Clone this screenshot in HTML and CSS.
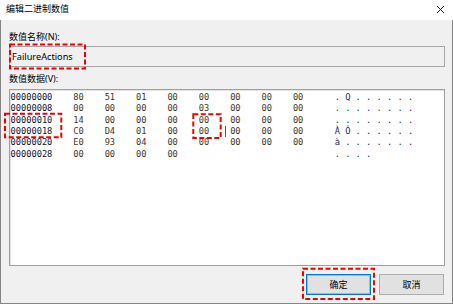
FILE: index.html
```html
<!DOCTYPE html>
<html lang="zh-CN">
<head>
<meta charset="utf-8">
<title>编辑二进制数值</title>
<link rel="stylesheet" href="styles.css">
</head>
<body>
<div class="window">
  <div class="titlebar">
    <span class="title">编辑二进制数值</span>
    <svg class="close" width="9" height="9" viewBox="0 0 9 9"><path d="M1 1L8 8M8 1L1 8" stroke="#1a1a1a" stroke-width="1" fill="none"/></svg>
  </div>
  <div class="dialog">
    <div class="label">数值名称(N):</div>
    <div class="namebox">FailureActions</div>
    <div class="label label-data">数值数据(V):</div>
    <div class="hexbox">
      <div class="row"><span class="off">00000000</span><span class="b">80</span><span class="b">51</span><span class="b">01</span><span class="b">00</span><span class="b">00</span><span class="b">00</span><span class="b">00</span><span class="b">00</span><span class="asc">. Q . . . . . .</span></div>
      <div class="row"><span class="off">00000008</span><span class="b">00</span><span class="b">00</span><span class="b">00</span><span class="b">00</span><span class="b">03</span><span class="b">00</span><span class="b">00</span><span class="b">00</span><span class="asc">. . . . . . . .</span></div>
      <div class="row"><span class="off">00000010</span><span class="b">14</span><span class="b">00</span><span class="b">00</span><span class="b">00</span><span class="b">00</span><span class="b">00</span><span class="b">00</span><span class="b">00</span><span class="asc">. . . . . . . .</span></div>
      <div class="row"><span class="off">00000018</span><span class="b">C0</span><span class="b">D4</span><span class="b">01</span><span class="b">00</span><span class="b">00<span class="caret"></span></span><span class="b">00</span><span class="b">00</span><span class="b">00</span><span class="asc">À Ô . . . . . .</span></div>
      <div class="row"><span class="off">00000020</span><span class="b">E0</span><span class="b">93</span><span class="b">04</span><span class="b">00</span><span class="b">00</span><span class="b">00</span><span class="b">00</span><span class="b">00</span><span class="asc">à . . . . . . .</span></div>
      <div class="row"><span class="off">00000028</span><span class="b">00</span><span class="b">00</span><span class="b">00</span><span class="b">00</span><span class="asc">. . . .</span></div>
    </div>
    <div class="buttons">
      <button class="btn btn-default">确定</button>
      <button class="btn">取消</button>
    </div>
  </div>
</div>
<svg class="marks" width="453" height="306" viewBox="0 0 453 306">
  <rect x="10" y="44.5" width="75" height="24" />
  <rect x="5" y="113.7" width="56.3" height="23.6" />
  <rect x="193.3" y="114.3" width="27.4" height="23.7" />
  <rect x="303" y="268.7" width="71" height="30.3" />
</svg>
</body>
</html>
```
FILE: styles.css
```css
html, body {
  margin: 0;
  padding: 0;
  background: #ffffff;
}
body {
  width: 453px;
  height: 306px;
  position: relative;
  overflow: hidden;
  font-family: "Noto Sans", "Noto Sans CJK SC", sans-serif;
  font-size: 9px;
  color: #000;
}
.window {
  width: 453px;
  height: 304px;
  display: flex;
  flex-direction: column;
}
.titlebar {
  height: 20px;
  flex: none;
  background: #fff;
  display: flex;
  align-items: center;
  justify-content: space-between;
  padding: 0 8px 2px 6px;
  box-sizing: border-box;
}
.title {
  font-family: "Noto Sans CJK SC", sans-serif;
  font-size: 9px;
  line-height: 12px;
}
.close {
  display: block;
  margin-top: 1px;
}
.dialog {
  flex: 1;
  background: #f0f0f0;
  border: 1px solid #858585;
  border-top: none;
  padding: 11px 7px 8px 8px;
  display: flex;
  flex-direction: column;
}
.label {
  line-height: 12px;
  height: 12px;
}
.namebox {
  margin-top: 3px;
  height: 21px;
  box-sizing: border-box;
  border: 1px solid #a8a8a8;
  background: #f0f0f0;
  padding-left: 2px;
  line-height: 19px;
  font-size: 9.2px;
}
.label-data {
  margin-top: 6px;
}
.hexbox {
  margin-top: 4px;
  height: 177px;
  box-sizing: border-box;
  border: 1px solid #a0a0a0;
  box-shadow: inset 1px 1px 0 #e2e2e2;
  background: #fff;
  padding: 2px 0 0 0.5px;
  font-family: "DejaVu Sans Mono", "Liberation Mono", monospace;
  font-size: 8.7px;
}
.row {
  display: grid;
  grid-template-columns: 12ch repeat(8, 6ch) 2ch auto;
  height: 11.33px;
  line-height: 11.33px;
  white-space: pre;
}
.off {
  color: #0e1230;
}
.b {
  color: #45361c;
}
.asc {
  grid-column: 11;
  color: #17294f;
}
.caret {
  display: inline-block;
  width: 1px;
  height: 11px;
  margin-left: 3ch;
  background: #555;
  vertical-align: top;
}
.buttons {
  margin-top: 8px;
  display: flex;
  justify-content: flex-end;
  gap: 8px;
  padding-right: 1px;
}
.btn {
  width: 65px;
  height: 21px;
  box-sizing: border-box;
  margin: 0;
  padding: 0;
  border: 1px solid #adadad;
  background: #e1e1e1;
  font-family: "Noto Sans CJK SC", sans-serif;
  font-size: 9px;
  color: #000;
}
.btn-default {
  border-color: #0078d7;
  box-shadow: inset 0 0 0 1px rgba(0, 120, 215, 0.35);
}
.marks {
  position: absolute;
  left: 0;
  top: 0;
  pointer-events: none;
}
.marks rect {
  fill: none;
  stroke: #f00000;
  stroke-width: 2;
  stroke-dasharray: 5 2.5;
}
```
